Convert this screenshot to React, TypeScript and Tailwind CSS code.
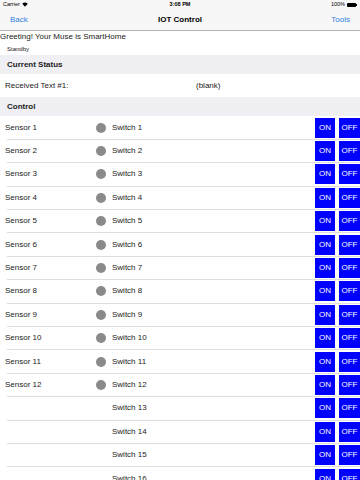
import React from 'react';

const rows = Array.from({ length: 16 }, (_, i) => i + 1);

function StatusBar() {
  return (
    <div className="relative flex h-[9.5px] items-center justify-between bg-[#f7f7f7] px-[3px] text-[5.5px] leading-none text-black">
      <div className="flex items-center gap-[2px]">
        <span>Carrier</span>
        <svg width="6" height="5" viewBox="0 0 12 9">
          <path d="M6 9 L0.5 3 A8 8 0 0 1 11.5 3 Z" fill="#000" />
        </svg>
      </div>
      <span className="absolute left-1/2 -translate-x-1/2 font-semibold">3:08 PM</span>
      <div className="flex items-center gap-[2px]">
        <span>100%</span>
        <div className="flex items-center">
          <div className="h-[4px] w-[9px] rounded-[1px] bg-black" />
          <div className="h-[2px] w-[1px] bg-black" />
        </div>
      </div>
    </div>
  );
}

function NavBar() {
  return (
    <div className="relative flex h-[21.5px] items-center justify-between border-b border-[#b2b2b2] bg-[#f7f7f7] px-[10px] text-[8px] leading-none">
      <span className="text-[#2f7fdc]">Back</span>
      <span className="absolute left-1/2 -translate-x-1/2 font-bold text-black">IOT Control</span>
      <span className="text-[#2f7fdc]">Tools</span>
    </div>
  );
}

function SectionHeader({ title }: { title: string }) {
  return (
    <div className="flex h-[19px] items-center bg-[#efeff4] pl-[7px] text-[8px] font-semibold leading-none text-[#222]">
      {title}
    </div>
  );
}

export default function App() {
  return (
    <div className="h-[480px] w-[360px] overflow-hidden bg-white font-['Liberation_Sans',Arial,sans-serif] text-[#222]">
      <StatusBar />
      <NavBar />
      <div className="flex h-[11px] items-center text-[8px] leading-none">Greeting! Your Muse is SmartHome</div>
      <div className="flex h-[13px] items-center pl-[7px] text-[6px] leading-none">Standby</div>
      <SectionHeader title="Current Status" />
      <div className="flex h-[23px] items-center pl-[5px] text-[8px] leading-none">
        <span className="w-[191px]">Received Text #1:</span>
        <span>(blank)</span>
      </div>
      <SectionHeader title="Control" />
      <div className="h-[0.5px]" />
      {rows.map((n) => (
        <div key={n} className="flex h-[23.4px] flex-col">
          <div className="flex flex-1 items-center text-[8px] leading-none">
            <span className="w-[96px] pl-[5px]">{n <= 12 ? `Sensor ${n}` : ''}</span>
            <span className="w-[16px]">
              {n <= 12 && <span className="block h-[10px] w-[10px] rounded-full bg-[#8a8a8a]" />}
            </span>
            <span className="flex-1">Switch {n}</span>
            <span className="mr-[4px] flex h-[20px] w-[20px] items-center justify-center bg-[#0000ff] text-[8px] text-white">ON</span>
            <span className="flex h-[20px] w-[21px] items-center justify-center bg-[#0000ff] text-[8px] text-white">OFF</span>
          </div>
          <div className="ml-[7px] h-px bg-[#dedede]" />
        </div>
      ))}
    </div>
  );
}
